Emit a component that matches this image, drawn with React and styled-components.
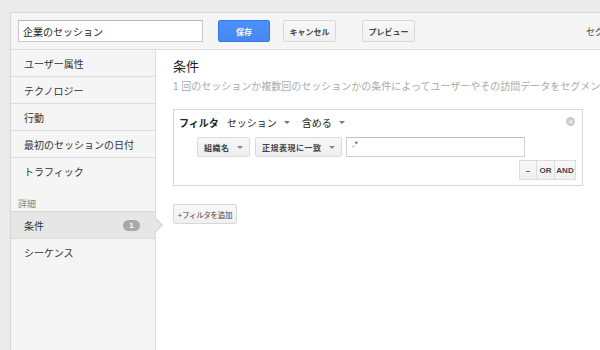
import React from "react";
import styled, { createGlobalStyle } from "styled-components";

const GlobalStyle = createGlobalStyle`
  html, body {
    margin: 0;
    padding: 0;
    background: #ebebeb;
    font-family: Arial, "Liberation Sans", "Noto Sans CJK JP", sans-serif;
    font-size: 11px;
    color: #333;
    overflow: hidden;
  }
`;

const Page = styled.div`
  width: 600px;
  height: 350px;
  padding: 12px 0 0 10px;
  box-sizing: border-box;
`;

const Panel = styled.div`
  height: 100%;
  border-top: 1px solid #d6d6d6;
  border-left: 1px solid #d6d6d6;
  background: #fff;
  display: flex;
  flex-direction: column;
`;

const Header = styled.div`
  height: 36px;
  background: #f5f5f5;
  border-bottom: 1px solid #dcdcdc;
  display: flex;
  align-items: center;
  padding-left: 7px;
  white-space: nowrap;
  overflow: hidden;
`;

const NameInput = styled.div`
  width: 185px;
  height: 22px;
  box-sizing: border-box;
  border: 1px solid #c9c9c9;
  border-top-color: #b5b5b5;
  background: #fff;
  display: flex;
  align-items: center;
  padding-left: 4px;
  font-size: 10px;
  color: #222;
  margin-right: 15px;
`;

const Button = styled.div`
  height: ${(p) => p.$h || 20}px;
  width: ${(p) => p.$w}px;
  box-sizing: border-box;
  display: inline-flex;
  align-items: center;
  justify-content: center;
  overflow: hidden;
  border-radius: 2px;
  font-size: ${(p) => p.$fs || 8}px;
  letter-spacing: ${(p) => p.$ls || 0}px;
  font-weight: ${(p) => (p.$bold ? "bold" : "normal")};
  color: ${(p) => (p.$primary ? "#fff" : "#444")};
  background: ${(p) =>
    p.$primary ? "linear-gradient(#4d90fe, #4787ed)" : "linear-gradient(#f8f8f8, #f0f0f0)"};
  border: 1px solid ${(p) => (p.$primary ? "#3079ed" : "#d8d8d8")};
  margin-right: ${(p) => p.$mr || 0}px;
  flex-shrink: 0;
`;

const HeaderTail = styled.span`
  margin-left: auto;
  font-size: 9px;
  color: #444;
  margin-right: -4px;
`;

const Body = styled.div`
  flex: 1;
  display: flex;
`;

const Sidebar = styled.div`
  width: 144px;
  background: #f5f5f5;
  border-right: 1px solid #dcdcdc;
  display: flex;
  flex-direction: column;
`;

const NavItem = styled.div`
  position: relative;
  height: 26px;
  display: flex;
  align-items: center;
  padding-left: 13px;
  padding-right: 13px;
  font-size: 10px;
  color: #333;
  border-bottom: 1px solid ${(p) => (p.$noLine ? "transparent" : "#dcdcdc")};
  background: ${(p) => (p.$active ? "#e6e6e6" : "transparent")};
  border-top: ${(p) => (p.$active ? "1px solid #d6d6d6" : "none")};
`;

const SectionLabel = styled.div`
  padding: 14px 0 1px 7px;
  line-height: 11px;
  font-size: 9px;
  color: #888;
`;

const Badge = styled.span`
  margin-left: auto;
  width: 17px;
  height: 11px;
  border-radius: 6px;
  background: #a8a8a8;
  color: #fff;
  font-size: 8px;
  font-weight: bold;
  display: flex;
  align-items: center;
  justify-content: center;
  margin-right: 2px;
`;

const Notch = styled.span`
  position: absolute;
  right: -8px;
  top: 6px;
  width: 0;
  height: 0;
  border-top: 7px solid transparent;
  border-bottom: 7px solid transparent;
  border-left: 7px solid #d6d6d6;
  &::after {
    content: "";
    position: absolute;
    left: -8px;
    top: -6px;
    border-top: 6px solid transparent;
    border-bottom: 6px solid transparent;
    border-left: 6px solid #e6e6e6;
  }
`;

const Main = styled.div`
  flex: 1;
  padding: 8px 0 0 17px;
  overflow: hidden;
  white-space: nowrap;
`;

const Title = styled.div`
  font-size: 13px;
  color: #222;
  height: 18px;
  line-height: 18px;
`;

const Subtitle = styled.div`
  font-size: 10px;
  color: #aaa;
  margin-top: 2px;
  height: 14px;
`;

const FilterBox = styled.div`
  width: 410px;
  height: 77px;
  box-sizing: border-box;
  margin-top: 17px;
  border: 1px solid #d6d6d6;
  position: relative;
  padding: 6px 0 0 5px;
`;

const FilterHead = styled.div`
  display: flex;
  align-items: center;
  height: 12px;
  font-size: 10px;
  color: #222;
`;

const Label = styled.span`
  font-weight: bold;
  margin-right: 8px;
`;

const Drop = styled.span`
  display: inline-flex;
  align-items: center;
  margin-right: ${(p) => p.$mr || 0}px;
  &::after {
    content: "";
    margin-left: 7px;
    border-left: 3px solid transparent;
    border-right: 3px solid transparent;
    border-top: 3px solid #777;
  }
`;

const CloseIcon = styled.span`
  position: absolute;
  right: 7px;
  top: 7px;
  width: 9px;
  height: 9px;
  border-radius: 50%;
  background: #ccc;
  color: #fff;
  font-size: 8px;
  line-height: 9px;
  text-align: center;
`;

const CondRow = styled.div`
  display: flex;
  align-items: center;
  margin: 9px 0 0 18px;
  gap: 5px;
`;

const SelectBtn = styled.div`
  height: 20px;
  box-sizing: border-box;
  width: ${(p) => p.$w}px;
  display: flex;
  align-items: center;
  padding-left: 6px;
  background: linear-gradient(#f7f7f7, #eeeeee);
  border: 1px solid #dcdcdc;
  border-radius: 2px;
  font-size: 8px;
  font-weight: bold;
  color: #444;
  letter-spacing: 0.5px;
  &::after {
    content: "";
    margin-left: auto;
    margin-right: 6px;
    border-left: 3px solid transparent;
    border-right: 3px solid transparent;
    border-top: 3px solid #888;
  }
`;

const ValueInput = styled.div`
  width: 179px;
  height: 20px;
  box-sizing: border-box;
  border: 1px solid #d0d0d0;
  border-top-color: #c0c0c0;
  padding-left: 5px;
  font-size: 9px;
  color: #555;
  line-height: 12px;
  margin-left: -1px;
`;

const Ops = styled.div`
  display: flex;
  justify-content: flex-end;
  margin: 3px 6px 0 0;
`;

const OpBtn = styled.div`
  height: 20px;
  width: ${(p) => p.$w}px;
  box-sizing: border-box;
  display: flex;
  align-items: center;
  justify-content: center;
  background: linear-gradient(#f8f8f8, #efefef);
  border: 1px solid #dcdcdc;
  margin-left: -1px;
  font-size: 8px;
  font-weight: bold;
  color: #444;
`;

const AddWrap = styled.div`
  margin-top: 18px;
`;

const navItems = ["ユーザー属性", "テクノロジー", "行動", "最初のセッションの日付"];

export default function App() {
  return (
    <>
      <GlobalStyle />
      <Page>
        <Panel>
          <Header>
            <NameInput>企業のセッション</NameInput>
            <Button $primary $bold $w={52} $h={22} $mr={13}>
              保存
            </Button>
            <Button $bold $w={53} $h={22} $mr={26}>
              キャンセル
            </Button>
            <Button $bold $w={53} $h={22}>
              プレビュー
            </Button>
            <HeaderTail>セグ</HeaderTail>
          </Header>
          <Body>
            <Sidebar>
              {navItems.map((t) => (
                <NavItem key={t}>{t}</NavItem>
              ))}
              <NavItem $noLine>トラフィック</NavItem>
              <SectionLabel>詳細</SectionLabel>
              <NavItem $active>
                条件
                <Badge>1</Badge>
                <Notch />
              </NavItem>
              <NavItem $noLine>シーケンス</NavItem>
            </Sidebar>
            <Main>
              <Title>条件</Title>
              <Subtitle>
                1 回のセッションか複数回のセッションかの条件によってユーザーやその訪問データをセグメント化します。
              </Subtitle>
              <FilterBox>
                <FilterHead>
                  <Label>フィルタ</Label>
                  <Drop $mr={12}>セッション</Drop>
                  <Drop>含める</Drop>
                </FilterHead>
                <CloseIcon>×</CloseIcon>
                <CondRow>
                  <SelectBtn $w={53}>組織名</SelectBtn>
                  <SelectBtn $w={87}>正規表現に一致</SelectBtn>
                  <ValueInput>.*</ValueInput>
                </CondRow>
                <Ops>
                  <OpBtn $w={18}>–</OpBtn>
                  <OpBtn $w={19}>OR</OpBtn>
                  <OpBtn $w={22}>AND</OpBtn>
                </Ops>
              </FilterBox>
              <AddWrap>
                <Button $w={64} $h={20} $fs={7.5} $ls={-0.3}>
                  +フィルタを追加
                </Button>
              </AddWrap>
            </Main>
          </Body>
        </Panel>
      </Page>
    </>
  );
}
